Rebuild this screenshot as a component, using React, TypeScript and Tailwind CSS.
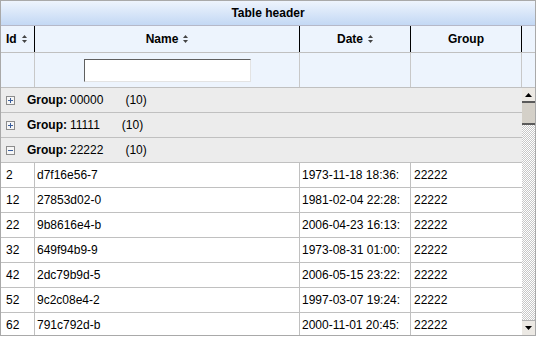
import React from "react";

const groups = [
  { code: "00000", count: 10, open: false },
  { code: "11111", count: 10, open: false },
  { code: "22222", count: 10, open: true },
];

const rows = [
  { id: 2, name: "d7f16e56-7", date: "1973-11-18 18:36:", group: "22222" },
  { id: 12, name: "27853d02-0", date: "1981-02-04 22:28:", group: "22222" },
  { id: 22, name: "9b8616e4-b", date: "2006-04-23 16:13:", group: "22222" },
  { id: 32, name: "649f94b9-9", date: "1973-08-31 01:00:", group: "22222" },
  { id: 42, name: "2dc79b9d-5", date: "2006-05-15 23:22:", group: "22222" },
  { id: 52, name: "9c2c08e4-2", date: "1997-03-07 19:24:", group: "22222" },
  { id: 62, name: "791c792d-b", date: "2000-11-01 20:45:", group: "22222" },
];

function SortIcon() {
  return (
    <svg width="5" height="8" viewBox="0 0 5 8" className="ml-[5px] shrink-0">
      <path d="M2.5 0 L5 3 L0 3 Z" fill="#444" />
      <path d="M0 5 L5 5 L2.5 8 Z" fill="#444" />
    </svg>
  );
}

function ToggleIcon({ open }: { open: boolean }) {
  return (
    <svg width="9" height="9" viewBox="0 0 9 9" className="shrink-0">
      <rect x="0.5" y="0.5" width="8" height="8" fill="#f6f6f6" stroke="#8c8c8c" />
      <path d="M2 4.5 H7" stroke="#3a5e9c" strokeWidth="1" />
      {!open && <path d="M4.5 2 V7" stroke="#3a5e9c" strokeWidth="1" />}
    </svg>
  );
}

function Arrow({ up }: { up: boolean }) {
  return (
    <svg width="7" height="4" viewBox="0 0 7 4">
      {up ? <path d="M3.5 0 L7 4 L0 4 Z" fill="#000" /> : <path d="M0 0 L7 0 L3.5 4 Z" fill="#000" />}
    </svg>
  );
}

export default function App() {
  return (
    <div className="w-[537px] h-[337px] bg-white" style={{ fontFamily: '"Liberation Sans", Arial, sans-serif' }}>
      <div className="w-[536px] h-[336px] border border-[#a9a9a9] flex flex-col overflow-hidden text-[12px] text-black">
        {/* title */}
        <div className="h-[25px] shrink-0 border-b border-[#b5b8c8] bg-linear-to-b from-[#eef4fd] to-[#c3d8f4] flex items-center justify-center font-bold">
          Table header
        </div>

        {/* column headers */}
        <div className="h-[27px] shrink-0 flex border-b border-[#c0c0c0] bg-[#edf4fd] font-bold">
          <div className="w-[34px] border-r border-black flex items-center pl-[5px]">
            Id <SortIcon />
          </div>
          <div className="w-[265px] border-r border-black flex items-center justify-center">
            Name <SortIcon />
          </div>
          <div className="w-[111px] border-r border-black flex items-center justify-center">
            Date <SortIcon />
          </div>
          <div className="w-[111px] border-r border-black flex items-center justify-center">
            Group
          </div>
          <div className="flex-1" />
        </div>

        {/* filter row */}
        <div className="h-[35px] shrink-0 flex border-b border-[#c0c0c0] bg-[#edf4fd]">
          <div className="w-[34px] border-r border-[#c8c8c8]" />
          <div className="w-[265px] border-r border-[#c8c8c8] flex items-center justify-center">
            <input className="w-[167px] h-[23px] bg-white border border-t-[#5f5f5f] border-l-[#5f5f5f] border-r-[#e3e3e3] border-b-[#e3e3e3] outline-none" />
          </div>
          <div className="w-[111px] border-r border-[#c8c8c8]" />
          <div className="w-[111px] border-r border-[#c8c8c8]" />
          <div className="flex-1" />
        </div>

        {/* body */}
        <div className="flex-1 flex min-h-0">
          <div className="w-[521px] overflow-hidden">
            {groups.map((g) => (
              <div key={g.code} className="h-[25px] flex items-center bg-[#ececec] border-b border-[#c0c0c0] pl-[5px]">
                <ToggleIcon open={g.open} />
                <span className="ml-[12px] font-bold">Group:</span>
                <span className="ml-[3px]">{g.code}</span>
                <span className="ml-[22px]">({g.count})</span>
              </div>
            ))}
            {rows.map((r) => (
              <div key={r.id} className="h-[25px] flex border-b border-[#c0c0c0] whitespace-nowrap">
                <div className="w-[34px] border-r border-[#c0c0c0] flex items-center pl-[5px] overflow-hidden">{r.id}</div>
                <div className="w-[265px] border-r border-[#c0c0c0] flex items-center pl-[2px] overflow-hidden">{r.name}</div>
                <div className="w-[111px] border-r border-[#c0c0c0] flex items-center pl-[2px] overflow-hidden">{r.date}</div>
                <div className="w-[111px] flex items-center pl-[3px] overflow-hidden">{r.group}</div>
              </div>
            ))}
          </div>

          {/* scrollbar */}
          <div className="flex-1 flex flex-col bg-[image:repeating-conic-gradient(#c8c8c8_0%_25%,#ffffff_0%_50%)] bg-[length:2px_2px]">
            <div className="h-[15px] shrink-0 bg-[#ece9e4] border-b-2 border-[#5a5a5a] flex items-center justify-center">
              <Arrow up />
            </div>
            <div className="h-[22px] shrink-0 bg-[#d4d0c8] border-b-2 border-[#5a5a5a]" />
            <div className="flex-1" />
            <div className="h-[15px] shrink-0 bg-[#ece9e4] border-t border-[#b0b0b0] flex items-center justify-center">
              <Arrow up={false} />
            </div>
          </div>
        </div>
      </div>
    </div>
  );
}
